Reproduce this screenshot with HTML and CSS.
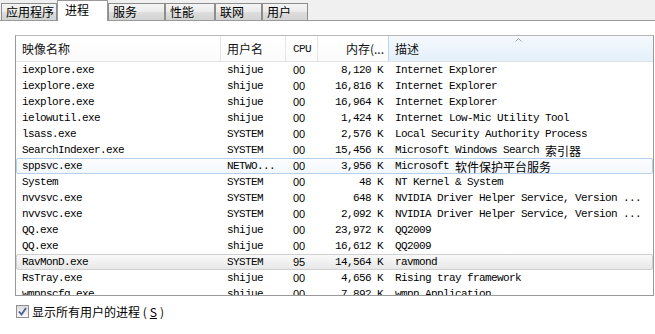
FILE: index.html
```html
<!DOCTYPE html>
<html lang="zh-CN">
  <head>
    <meta charset="UTF-8" />
    <title>Windows 任务管理器</title>
    <link rel="stylesheet" href="styles.css">
  </head>
  <body>
    <div class="tabs">
      <div class="tab">应用程序</div>
      <div class="tab active">进程</div>
      <div class="tab">服务</div>
      <div class="tab">性能</div>
      <div class="tab">联网</div>
      <div class="tab">用户</div>
    </div>
    <div class="panel">
      <div class="list">
        <div class="head">
          <div class="hc">映像名称</div>
          <div class="hc">用户名</div>
          <div class="hc mono">CPU</div>
          <div class="hc num">内存(...</div>
          <div class="hc sorted">描述
            <svg class="arrow" width="7" height="4" viewBox="0 0 7 4"><path d="M0.5 3.5 L3.5 0.5 L6.5 3.5" fill="none" stroke="#a0a8b4" stroke-width="1"/></svg>
          </div>
        </div>
        <div class="rows">
          <div class="row"><span>iexplore.exe</span><span>shijue</span><span>00</span><span class="num">8,120 K</span><span>Internet Explorer</span></div>
          <div class="row"><span>iexplore.exe</span><span>shijue</span><span>00</span><span class="num">16,816 K</span><span>Internet Explorer</span></div>
          <div class="row"><span>iexplore.exe</span><span>shijue</span><span>00</span><span class="num">16,964 K</span><span>Internet Explorer</span></div>
          <div class="row"><span>ielowutil.exe</span><span>shijue</span><span>00</span><span class="num">1,424 K</span><span>Internet Low-Mic Utility Tool</span></div>
          <div class="row"><span>lsass.exe</span><span>SYSTEM</span><span>00</span><span class="num">2,576 K</span><span>Local Security Authority Process</span></div>
          <div class="row"><span>SearchIndexer.exe</span><span>SYSTEM</span><span>00</span><span class="num">15,456 K</span><span>Microsoft Windows Search <i class="cjk">索引器</i></span></div>
          <div class="row hot"><span>sppsvc.exe</span><span>NETWO...</span><span>00</span><span class="num">3,956 K</span><span>Microsoft <i class="cjk">软件保护平台服务</i></span></div>
          <div class="row"><span>System</span><span>SYSTEM</span><span>00</span><span class="num">48 K</span><span>NT Kernel &amp; System</span></div>
          <div class="row"><span>nvvsvc.exe</span><span>SYSTEM</span><span>00</span><span class="num">648 K</span><span>NVIDIA Driver Helper Service, Version ...</span></div>
          <div class="row"><span>nvvsvc.exe</span><span>SYSTEM</span><span>00</span><span class="num">2,092 K</span><span>NVIDIA Driver Helper Service, Version ...</span></div>
          <div class="row"><span>QQ.exe</span><span>shijue</span><span>00</span><span class="num">23,972 K</span><span>QQ2009</span></div>
          <div class="row"><span>QQ.exe</span><span>shijue</span><span>00</span><span class="num">16,612 K</span><span>QQ2009</span></div>
          <div class="row selected"><span>RavMonD.exe</span><span>SYSTEM</span><span>95</span><span class="num">14,564 K</span><span>ravmond</span></div>
          <div class="row"><span>RsTray.exe</span><span>shijue</span><span>00</span><span class="num">4,656 K</span><span>Rising tray framework</span></div>
          <div class="row"><span>wmpnscfg.exe</span><span>shijue</span><span>00</span><span class="num">7,892 K</span><span>wmpn Application</span></div>
        </div>
      </div>
      <label class="showall">
        <span class="box">
          <svg width="9" height="9" viewBox="0 0 9 9"><path d="M1 4.5 L3.5 7.5 L8 1" fill="none" stroke="#4a5f97" stroke-width="1.8"/></svg>
        </span>
        显示所有用户的进程 (<u>S</u>)
      </label>
    </div>
  </body>
</html>
```
FILE: styles.css
```css
* {
  box-sizing: border-box;
}
body {
  margin: 0;
  background: #fff;
  font-family: "Noto Sans CJK SC", sans-serif;
  font-size: 12px;
  color: #000;
}

.tabs {
  display: flex;
  align-items: flex-end;
  height: 21px;
  padding-left: 1px;
  background: #f0f0f0;
  border-bottom: 1px solid #999;
}
.tab {
  height: 17px;
  padding-left: 4px;
  line-height: 15px;
  font-size: 12px;
  border: 1px solid #8d8d8d;
  border-bottom: 0;
  background: linear-gradient(#f4f4f4, #ebebeb 50%, #dedede 50%, #d3d3d3);
}
.tab:nth-child(1) { width: 56px; }
.tab:nth-child(2) { width: 51px; }
.tab:nth-child(3) { width: 57px; }
.tab:nth-child(4) { width: 50px; }
.tab:nth-child(5) { width: 47px; }
.tab:nth-child(6) { width: 46px; }
.tab.active {
  height: 21px;
  margin-bottom: -1px;
  padding-left: 7px;
  line-height: 18px;
  background: #fff;
  border-color: #999;
}

.panel {
  padding: 14px 1px 0 15px;
}
.list {
  height: 261px;
  border: 1px solid #9a9a9a;
  border-top-color: #b8b8b8;
  overflow: hidden;
}

.head {
  display: grid;
  grid-template-columns: 205px 65px 32px 71px 1fr;
  height: 26px;
  border-bottom: 1px solid #e2e2e2;
  background: linear-gradient(#fff, #fbfbfb);
}
.hc {
  padding: 3px 6px 0;
  line-height: 20px;
  border-right: 1px solid #e6e6e6;
  color: #111;
}
.hc.mono {
  font-family: "Liberation Mono", monospace;
  font-size: 11px;
  letter-spacing: -0.6px;
  padding-left: 7px;
}
.hc.num {
  text-align: right;
  padding-right: 4px;
  border-right-color: #bcd5ec;
}
.hc.sorted {
  position: relative;
  border-right: 0;
  background: linear-gradient(#f4f9fd, #e4f0fa);
}
.arrow {
  position: absolute;
  left: 126px;
  top: 2px;
}

.rows {
  font-family: "Liberation Mono", "Noto Sans CJK SC", monospace;
  font-size: 11px;
  letter-spacing: -0.6px;
}
.row {
  display: grid;
  grid-template-columns: 205px 65px 32px 71px 1fr;
  height: 16px;
  line-height: 15px;
  border: 1px solid transparent;
  white-space: nowrap;
}
.row span {
  padding-left: 5px;
  overflow: hidden;
}
.row span:nth-child(3) {
  padding-left: 6px;
  font-family: "Liberation Sans", sans-serif;
  font-size: 11px;
  letter-spacing: 0;
}
.row span:nth-child(5) {
  overflow: visible;
}
.row .num {
  text-align: right;
  padding-right: 7px;
}
.cjk {
  font-style: normal;
  font-family: "Noto Sans CJK SC", sans-serif;
  font-size: 12px;
  line-height: 15px;
  vertical-align: top;
  letter-spacing: 0;
}
.row.hot {
  border-color: #b6d0ec;
  border-radius: 2px;
  background: linear-gradient(#fcfdfe, #f3f8fd);
}
.row.selected {
  border-color: #d0d0d0;
  border-radius: 2px;
  background: linear-gradient(#f9f9f9, #e8e8e8);
}

.showall {
  display: flex;
  align-items: center;
  gap: 3px;
  margin-top: 7px;
  margin-left: 1px;
  height: 16px;
  font-size: 12px;
}
.box {
  display: flex;
  align-items: center;
  justify-content: center;
  width: 13px;
  height: 13px;
  border: 1px solid #8f8f8f;
  background: linear-gradient(#dcdcdc, #fafafa);
}
.showall u {
  text-decoration: underline;
}
```
